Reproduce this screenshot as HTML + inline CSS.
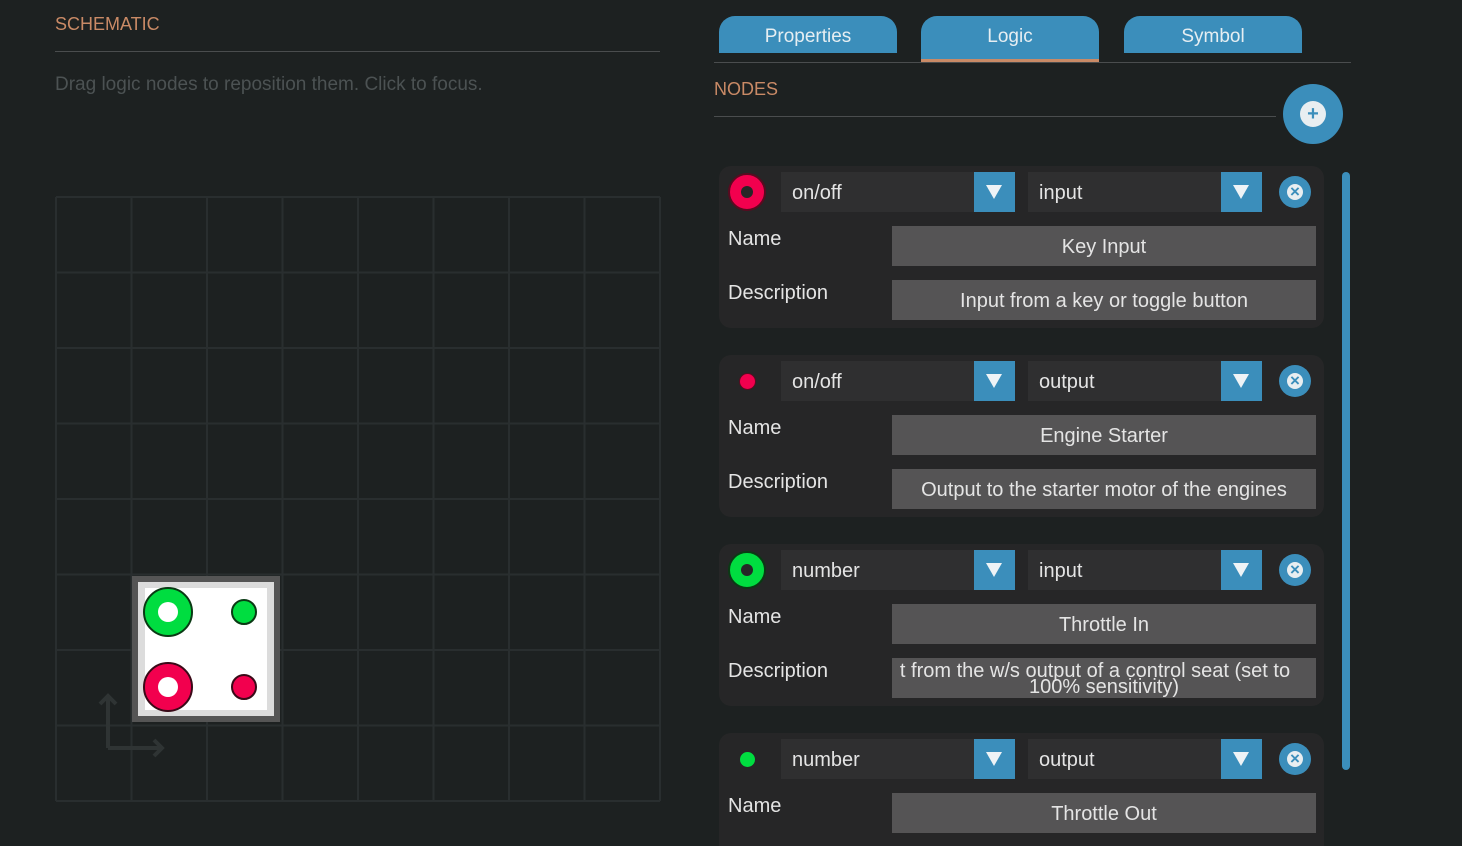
<!DOCTYPE html>
<html><head><meta charset="utf-8"><style>
*{margin:0;padding:0;box-sizing:border-box}
html,body{width:1462px;height:846px;overflow:hidden}
body{background:#1d2121;font-family:"Liberation Sans","DejaVu Sans",sans-serif;color:#e4e4e4;position:relative}
.a{position:absolute}
.title{color:#c98a66;font-size:18px}
.tab{position:absolute;top:16px;height:37px;width:178px;background:#3b8ebb;border-radius:16px 16px 0 0;color:#e6eef2;font-size:19px;text-align:center;line-height:42px}
.card{position:absolute;left:719px;width:605px;height:162px;background:#262627;border-radius:12px}
.dd{position:absolute;top:6px;height:40px;width:234px;background:#2f2f30;font-size:20px;line-height:42px;padding-left:11px}
.dd b{position:absolute;right:0;top:0;width:41px;height:40px;background:#3b8ebb}
.dd b:after{content:"";position:absolute;left:12px;top:13px;border-left:8px solid transparent;border-right:8px solid transparent;border-top:14px solid #eef3f6}
.x{position:absolute;left:560px;top:10px;width:32px;height:32px;border-radius:50%;background:#3b8ebb}
.x:before{content:"";position:absolute;left:8px;top:8px;width:16px;height:16px;border-radius:50%;background:#e8eef1}
.x:after{content:"×";position:absolute;left:0;top:5px;width:32px;text-align:center;color:#3b8ebb;font-size:17px;font-weight:bold;line-height:22px}
.lbl{position:absolute;left:9px;font-size:20px}
.inp{position:absolute;left:173px;width:424px;height:40px;background:#555455;text-align:center;font-size:20px;line-height:42px;white-space:nowrap;overflow:hidden}
</style></head><body>
<div class="a title" style="left:55px;top:14px">SCHEMATIC</div>
<div class="a" style="left:55px;top:51px;width:605px;height:1px;background:#4a4d4e"></div>
<div class="a" style="left:55px;top:74px;font-size:19px;color:#4c5253">Drag logic nodes to reposition them. Click to focus.</div>
<svg class="a" style="left:55px;top:196px" width="606" height="606">
<g stroke="#292e2f" stroke-width="2" fill="none">
<path d="M1 1V605M76.5 1V605M152 1V605M227.5 1V605M303 1V605M378.5 1V605M454 1V605M529.5 1V605M605 1V605"/>
<path d="M1 1H605M1 76.5H605M1 152H605M1 227.5H605M1 303H605M1 378.5H605M1 454H605M1 529.5H605M1 605H605"/>
</g>
<g stroke="#2f3434" stroke-width="4" fill="none"><path d="M53 552V500M45 508L53 500L61 508M53 552H107M99 544L107 552L99 560"/></g>
<rect x="77" y="380" width="148" height="146" fill="#555"/>
<rect x="83" y="386" width="136" height="134" fill="#dcdcdc"/>
<rect x="90" y="392" width="122" height="122" fill="#fff"/>
<circle cx="113" cy="416" r="24" fill="#00dd40" stroke="#0a3a14" stroke-width="2"/><circle cx="113" cy="416" r="10" fill="#fff"/>
<circle cx="189" cy="416" r="12" fill="#00dd40" stroke="#0a3a14" stroke-width="2"/>
<circle cx="113" cy="491" r="24" fill="#f2004e" stroke="#3a0a18" stroke-width="2"/><circle cx="113" cy="491" r="10" fill="#fff"/>
<circle cx="189" cy="491" r="12" fill="#f2004e" stroke="#3a0a18" stroke-width="2"/>
</svg>

<div class="tab" style="left:719px">Properties</div>
<div class="tab" style="left:921px;height:46px;border-bottom:3px solid #c98a66">Logic</div>
<div class="tab" style="left:1124px">Symbol</div>
<div class="a" style="left:714px;top:62px;width:637px;height:1px;background:#4a4d4e"></div>
<div class="a title" style="left:714px;top:79px">NODES</div>
<div class="a" style="left:714px;top:116px;width:562px;height:1px;background:#4a4d4e"></div>
<div class="a" style="left:1283px;top:84px;width:60px;height:60px;border-radius:50%;background:#3b8ebb"></div>
<div class="a" style="left:1300px;top:101px;width:26px;height:26px;border-radius:50%;background:#e8eef1;color:#3b8ebb;text-align:center;font-weight:bold;font-size:20px;line-height:26px">+</div>
<div class="a" style="left:1342px;top:172px;width:8px;height:598px;border-radius:4px;background:#3b8ebb"></div>

<div class="card" style="top:166px">
<div class="a" style="left:9px;top:7px;width:38px;height:38px;border-radius:50%;background:#f2004e;border:2px solid #5a0a20"><div class="a" style="left:11px;top:11px;width:12px;height:12px;border-radius:50%;background:#262627"></div></div>
<div class="dd" style="left:62px">on/off<b></b></div><div class="dd" style="left:309px">input<b></b></div><div class="x"></div>
<div class="lbl" style="top:62px">Name</div><div class="inp" style="top:60px">Key Input</div>
<div class="lbl" style="top:116px">Description</div><div class="inp" style="top:114px">Input from a key or toggle button</div>
</div>
<div class="card" style="top:355px">
<div class="a" style="left:20px;top:18px;width:17px;height:17px;border-radius:50%;background:#f2004e;border:1px solid #5a0a20"></div>
<div class="dd" style="left:62px">on/off<b></b></div><div class="dd" style="left:309px">output<b></b></div><div class="x"></div>
<div class="lbl" style="top:62px">Name</div><div class="inp" style="top:60px">Engine Starter</div>
<div class="lbl" style="top:116px">Description</div><div class="inp" style="top:114px">Output to the starter motor of the engines</div>
</div>
<div class="card" style="top:544px">
<div class="a" style="left:9px;top:7px;width:38px;height:38px;border-radius:50%;background:#00dd40;border:2px solid #0a3a14"><div class="a" style="left:11px;top:11px;width:12px;height:12px;border-radius:50%;background:#262627"></div></div>
<div class="dd" style="left:62px">number<b></b></div><div class="dd" style="left:309px">input<b></b></div><div class="x"></div>
<div class="lbl" style="top:62px">Name</div><div class="inp" style="top:60px">Throttle In</div>
<div class="lbl" style="top:116px">Description</div><div class="inp" style="top:114px;line-height:16px;padding-top:5px;white-space:normal;text-align:center"><div style="white-space:nowrap;margin-left:-18px">t from the w/s output of a control seat (set to</div><div>100% sensitivity)</div></div>
</div>
<div class="card" style="top:733px;height:113px;border-radius:12px 12px 0 0">
<div class="a" style="left:21px;top:19px;width:15px;height:15px;border-radius:50%;background:#00dd40"></div>
<div class="dd" style="left:62px">number<b></b></div><div class="dd" style="left:309px">output<b></b></div><div class="x"></div>
<div class="lbl" style="top:62px">Name</div><div class="inp" style="top:60px">Throttle Out</div>
</div>
</body></html>
